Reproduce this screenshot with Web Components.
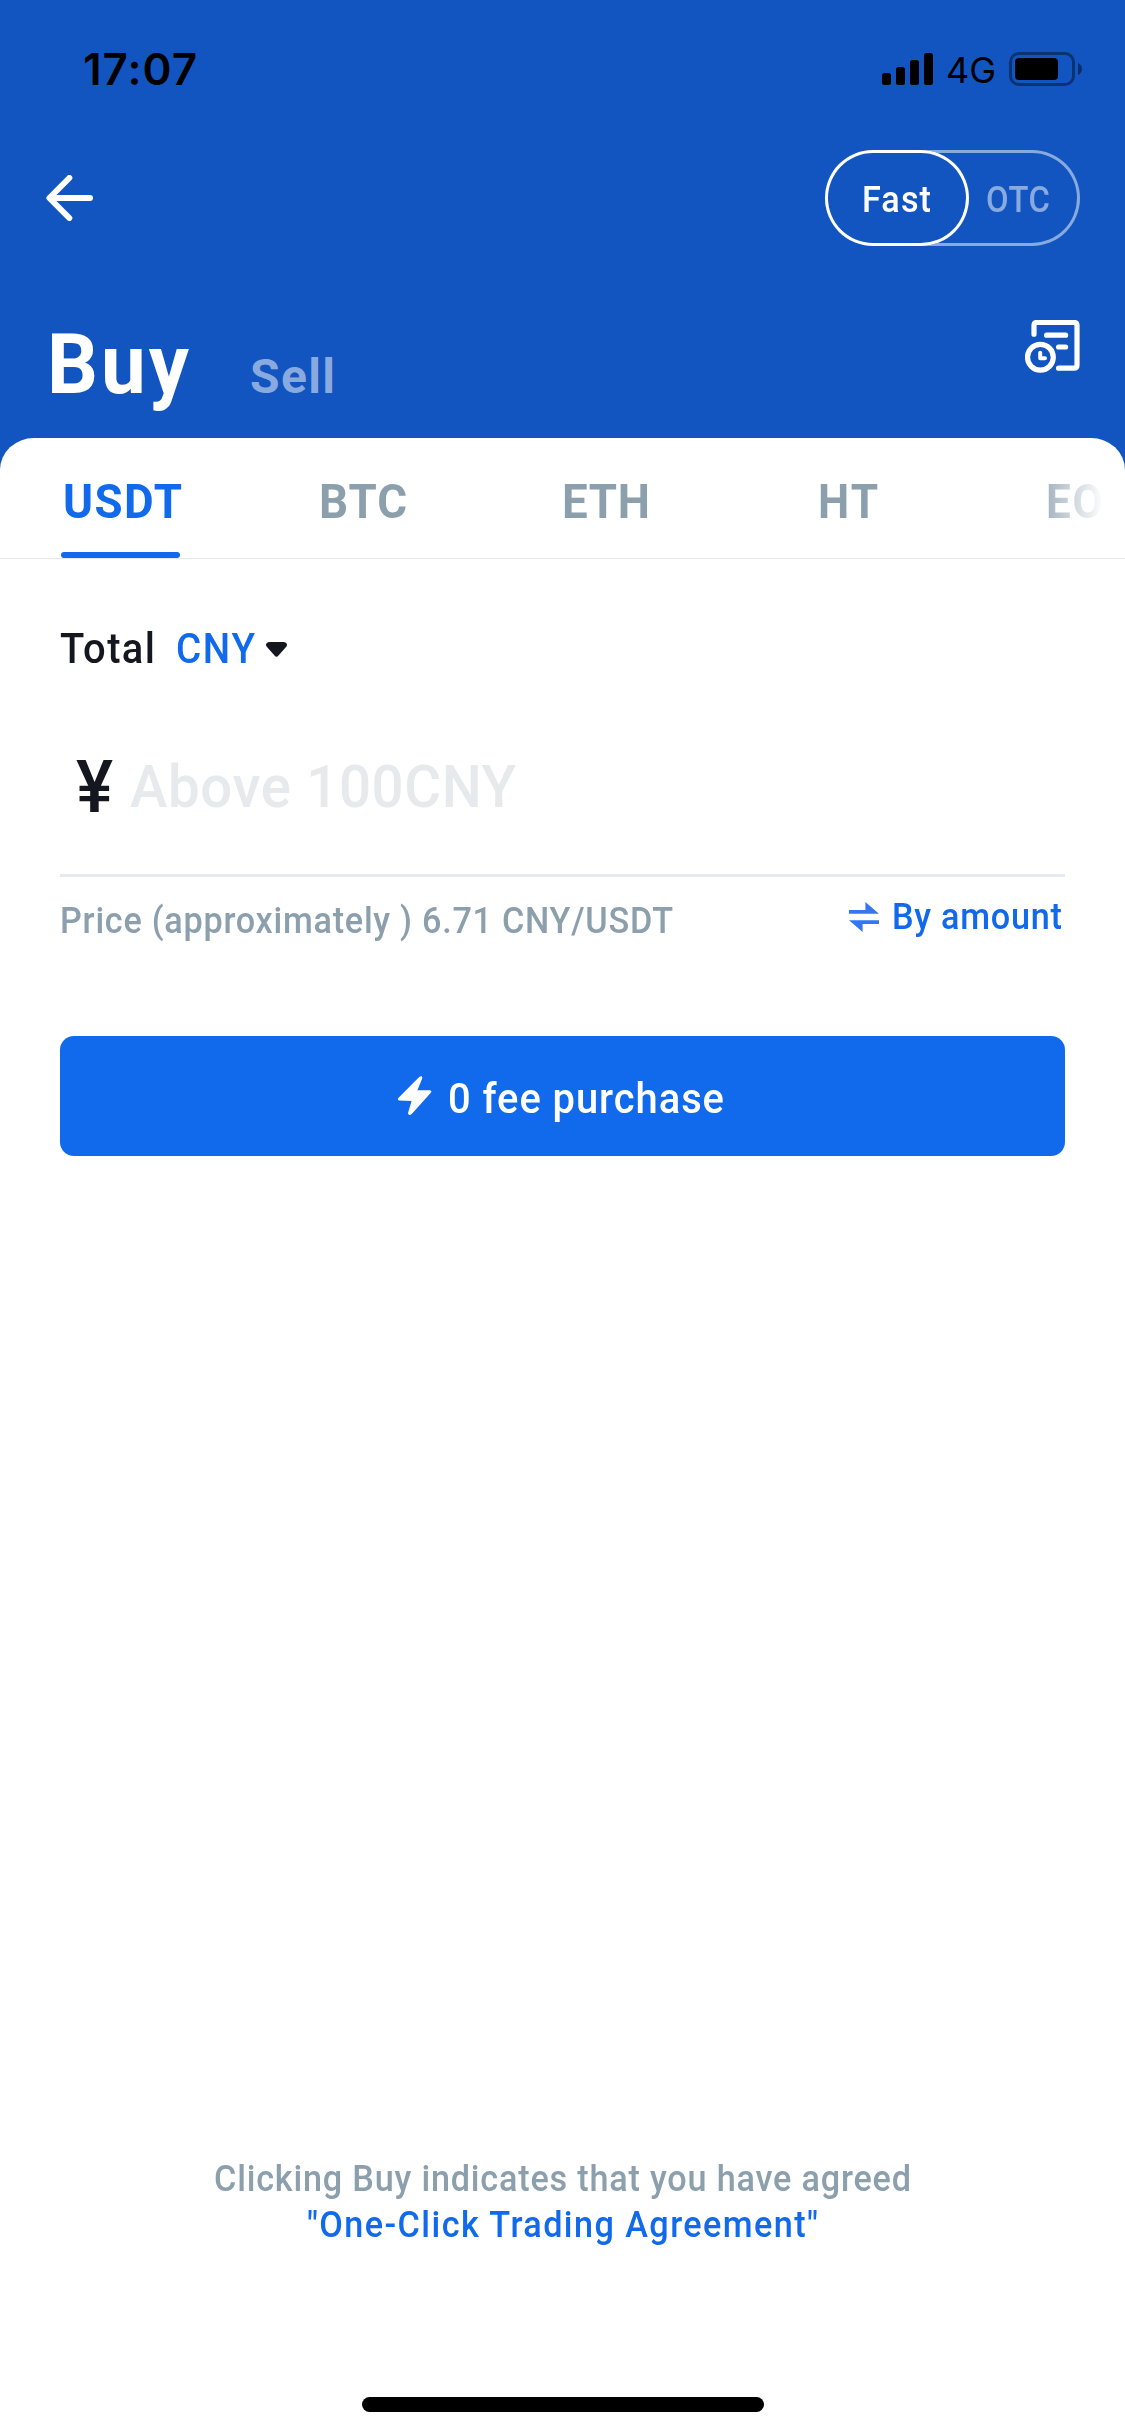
<!DOCTYPE html>
<html lang="en">
<head>
<meta charset="utf-8">
<title>Buy USDT</title>
<style>
  body { margin: 0; }
</style>
</head>
<body>
<buy-screen></buy-screen>
<script>
const define = (name, html, init) => {
  const tpl = document.createElement('template');
  tpl.innerHTML = html;
  customElements.define(name, class extends HTMLElement {
    constructor() {
      super();
      this.attachShadow({ mode: 'open' }).append(tpl.content.cloneNode(true));
    }
    connectedCallback() { if (init) init(this, this.shadowRoot); }
  });
};

/* A single line of text, slightly narrowed, whose tracking is spread over a given width. */
define('tracked-text', `
  <style>
    :host { display: block; flex: none; white-space: nowrap; }
    span { display: inline-block; transform-origin: 0 50%; }
  </style>
  <span><slot></slot></span>`, (el, root) => {
  const want = parseFloat(el.getAttribute('w'));
  const scale = parseFloat(el.getAttribute('x') || '0.95');
  const span = root.querySelector('span');
  const text = root.querySelector('slot').assignedNodes({ flatten: true }).map(t => t.textContent).join('');
  if (text.length > 1) {
    const natural = span.getBoundingClientRect().width;
    span.style.letterSpacing = ((want / scale - natural) / (text.length - 1)) + 'px';
  }
  if (scale !== 1) span.style.transform = 'scaleX(' + scale + ')';
  el.style.width = want + 'px';
});

define('status-bar', `
  <style>
    :host { display: flex; align-items: center; height: 138px; padding: 0 43px 0 83px; box-sizing: border-box; color: #000; font-family: Inter, sans-serif; }
    .time { font-size: 44px; font-weight: 600; margin-right: auto; }
    .net { font-size: 36px; margin: 2px 13px 0 13px; }
    svg { display: block; flex: none; }
  </style>
  <tracked-text class="time" w="114" x="1">17:07</tracked-text>
  <svg width="51" height="32"><rect y="20" width="9" height="12" rx="2.5"/><rect x="14" y="14" width="9" height="18" rx="2.5"/><rect x="28" y="7" width="9" height="25" rx="2.5"/><rect x="42" width="9" height="32" rx="2.5"/></svg>
  <tracked-text class="net" w="50" x="1">4G</tracked-text>
  <svg width="73" height="34"><rect x="1.5" y="1.5" width="63" height="31" rx="8.5" fill="none" stroke="#000" stroke-opacity=".4" stroke-width="3"/><rect x="6" y="6" width="43" height="22" rx="4"/><path d="M69 11Q73 13 73 17T69 23Z" fill-opacity=".45"/></svg>`);

define('mode-toggle', `
  <style>
    :host { display: flex; width: 255px; height: 96px; box-sizing: border-box; border-radius: 48px; box-shadow: inset 0 0 0 3px #88aadf; font-size: 36px; font-weight: 500; line-height: 96px; color: #88aadf; }
    .on { width: 144px; box-sizing: border-box; padding-left: 37px; border-radius: 48px; box-shadow: inset 0 0 0 3px #fff; background: #1255c0; color: #fff; }
    .off { padding-left: 17px; }
    tracked-text { margin-top: 2px; }
  </style>
  <div class="on"><tracked-text w="69">Fast</tracked-text></div>
  <div class="off"><tracked-text w="64" x=".91">OTC</tracked-text></div>`);

define('nav-bar', `
  <style>
    :host { display: flex; align-items: center; justify-content: space-between; height: 120px; padding: 0 45px 0 46px; box-sizing: border-box; }
  </style>
  <svg width="47" height="46" fill="none" stroke="#fff" stroke-width="6" stroke-linecap="round" stroke-linejoin="round"><path d="M23.3 3L3.4 23L23.3 43M4 23H44"/></svg>
  <mode-toggle></mode-toggle>`);

define('trade-title', `
  <style>
    :host { display: flex; align-items: flex-start; justify-content: space-between; height: 180px; padding: 62px 45px 0 47px; box-sizing: border-box; }
    .names { display: flex; align-items: baseline; gap: 61px; font-weight: 700; margin-top: -1px; }
    .buy { font-size: 84px; line-height: 92px; color: #fff; }
    .sell { font-size: 48px; line-height: 60px; color: #88aadf; }
  </style>
  <div class="names"><tracked-text class="buy" w="142">Buy</tracked-text><tracked-text class="sell" w="85" x="1">Sell</tracked-text></div>
  <svg width="55" height="53" fill="none" stroke="#fff" stroke-width="5.2" stroke-linecap="round" stroke-linejoin="round"><path d="M9 14.2V5.5Q9 2.4 12 2.4H49Q52 2.4 52 5.5V45Q52 48.2 49 48.2H33.6M21.6 15.2H40.6M33.6 27H40.6"/><circle cx="15.4" cy="37.2" r="12.9"/><path stroke-width="4" d="M15.2 32.7V38.3H20"/></svg>`);

define('coin-tab', `
  <style>
    :host { display: flex; flex-direction: column; justify-content: space-between; height: 120px; color: #8c9fad; }
    :host([active]) { color: #116aec; }
    .label { line-height: 107px; height: 114px; padding-top: 10px; box-sizing: border-box; }
    .bar { display: none; width: 119px; height: 6px; border-radius: 3px; background: #116aec; margin-left: -1px; }
    :host([active]) .bar { display: block; }
  </style>
  <div class="label"><slot></slot></div><div class="bar"></div>`);

define('coin-tabs', `
  <style>
    :host { display: flex; height: 121px; box-sizing: border-box; border-bottom: 1px solid #e6e9ec; }
    .strip { display: flex; width: 1104px; padding-left: 62px; box-sizing: border-box; font-size: 48px; font-weight: 700; -webkit-mask-image: linear-gradient(90deg, #000 1030px, transparent 1104px); mask-image: linear-gradient(90deg, #000 1030px, transparent 1104px); }
    coin-tab { flex: none; }
    .c2 { margin-left: 137px; } .c3 { margin-left: 155px; } .c4 { margin-left: 168px; } .c5 { margin-left: 168px; }
    .c1 tracked-text { margin-left: 1px; }
  </style>
  <div class="strip">
    <coin-tab class="c1" active><tracked-text w="119">USDT</tracked-text></coin-tab>
    <coin-tab class="c2"><tracked-text w="88">BTC</tracked-text></coin-tab>
    <coin-tab class="c3"><tracked-text w="88">ETH</tracked-text></coin-tab>
    <coin-tab class="c4"><tracked-text w="60" x=".92">HT</tracked-text></coin-tab>
    <coin-tab class="c5"><tracked-text w="57" x=".92">EO</tracked-text></coin-tab>
  </div>`);

define('amount-form', `
  <style>
    :host { display: block; padding: 0 60px; color: #14171f; font-weight: 500; }
    .total { display: flex; align-items: center; height: 60px; margin-top: 59px; font-size: 42px; line-height: 60px; }
    .total tracked-text { margin-top: 2px; }
    .total .cny { color: #116aec; margin: 2px 11px 0 21px; }
    .caret { margin-top: 3px; }
    .field { display: flex; height: 199px; padding: 69px 0 0 16px; border-bottom: 3px solid #e6eaed; box-sizing: border-box; line-height: 80px; }
    .yen { font-size: 72px; margin-top: 1px; }
    .hint { font-size: 60px; color: #e6eaed; margin-left: 16px; }
    .info { display: flex; justify-content: space-between; height: 84px; font-size: 36px; line-height: 86px; color: #8c9fad; margin-top: 1px; }
    .swap { display: flex; align-items: center; gap: 13px; height: 78px; line-height: 80px; color: #116aec; margin-right: 3px; }
  </style>
  <div class="total"><tracked-text w="95">Total</tracked-text><tracked-text class="cny" w="79" x=".92">CNY</tracked-text><svg class="caret" width="21" height="15"><path d="M3 0H18Q21 .5 21 3Q21 4 20 5L12.5 13.5Q10.5 16 8.5 13.5L1 5Q0 4 0 3Q0 .5 3 0Z" fill="#14171f"/></svg></div>
  <div class="field"><tracked-text class="yen" w="38" x=".97">¥</tracked-text><tracked-text class="hint" w="386" x=".94">Above 100CNY</tracked-text></div>
  <div class="info"><tracked-text w="613">Price (approximately ) 6.71 CNY/USDT</tracked-text>
    <div class="swap"><svg width="30" height="30" fill="#3576f3"><path d="M0 8H16.4V0L30 11.7H0ZM0 18.2H30V22H13.6V30Z"/></svg><tracked-text w="170">By amount</tracked-text></div></div>`);

define('buy-button', `
  <style>
    :host { display: flex; align-items: center; margin: 74px 60px 0; height: 120px; padding-left: 338px; box-sizing: border-box; border-radius: 14px; background: #116aec; color: #fff; font-size: 42px; font-weight: 500; gap: 16px; }
    svg { margin-top: -1px; } tracked-text { margin-top: 4px; }
  </style>
  <svg width="34" height="40" fill="#fff"><path d="M21.2 .9Q24.8-.8 24.2 2.6L19.4 14.2H32Q34.4 15 32.6 17L14 37.8Q10.4 40.6 10 37L13.6 24.9L1.2 24.6Q-1 24 .6 21.8Z"/></svg>
  <tracked-text w="276">0 fee purchase</tracked-text>`);

define('trade-agreement', `
  <style>
    :host { display: flex; flex-direction: column; align-items: center; font-size: 36px; font-weight: 500; line-height: 46px; color: #8c9fad; padding-bottom: 149px; }
    .link { color: #116aec; }
  </style>
  <tracked-text w="697">Clicking Buy indicates that you have agreed</tracked-text>
  <tracked-text class="link" w="511">"One-Click Trading Agreement"</tracked-text>`);

define('home-indicator', `
  <style>:host { display: block; width: 402px; height: 15px; border-radius: 8px; background: #000; margin: 0 auto 24px; }</style>`);

define('buy-screen', `
  <style>
    :host { display: flex; flex-direction: column; width: 1125px; height: 2436px; background: #1255c0; font-family: Roboto, sans-serif; overflow: hidden; }
    .sheet { flex: 1; display: flex; flex-direction: column; background: #fff; border-radius: 34px 34px 0 0 / 32px 32px 0 0; }
    trade-agreement { margin-top: auto; }
  </style>
  <status-bar></status-bar>
  <nav-bar></nav-bar>
  <trade-title></trade-title>
  <div class="sheet">
    <coin-tabs></coin-tabs>
    <amount-form></amount-form>
    <buy-button></buy-button>
    <trade-agreement></trade-agreement>
    <home-indicator></home-indicator>
  </div>`);
</script>
</body>
</html>
